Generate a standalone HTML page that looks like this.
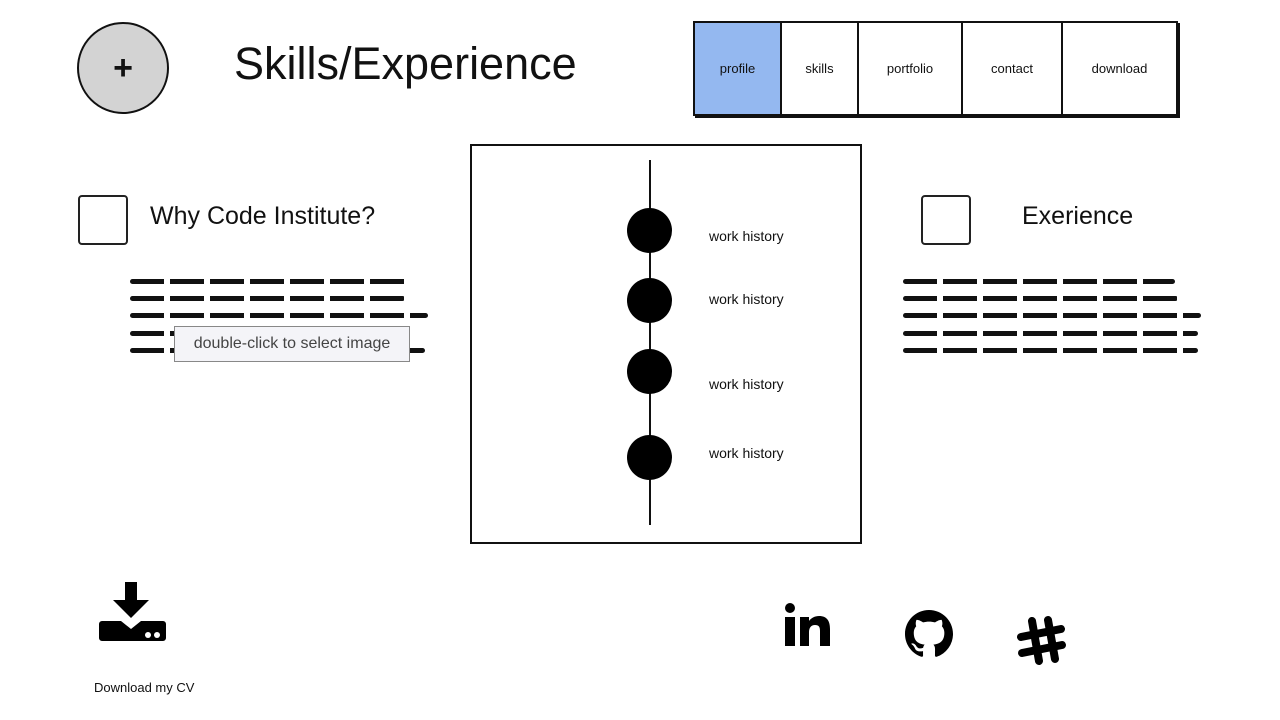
<!DOCTYPE html>
<html><head><meta charset="utf-8"><style>
body{margin:0;width:1280px;height:720px;background:#fff;position:relative;overflow:hidden;font-family:"Liberation Sans",sans-serif;color:#111}
.a{position:absolute}
.nav{left:693px;top:21px;width:481px;height:91px;border:2px solid #111;box-shadow:2px 2px 0 #111;display:flex}
.nav div{border-right:2px solid #111;display:flex;align-items:center;justify-content:center;font-size:13px;height:100%}
.nav div:last-child{border-right:none}
.ln{position:absolute;height:5px;background:repeating-linear-gradient(90deg,#111 0 34px,transparent 34px 40px);border-radius:3px}
.lbl{font-size:14px}
</style></head><body>
<div class="a" style="left:77px;top:22px;width:88px;height:88px;border-radius:50%;background:#d3d3d3;border:2px solid #111;display:flex;align-items:center;justify-content:center;font-size:34px;font-weight:bold">+</div>
<div class="a" style="left:234px;top:38px;font-size:45px">Skills/Experience</div>
<div class="a nav">
<div style="width:85px;background:#94b8f0">profile</div>
<div style="width:75px">skills</div>
<div style="width:102px">portfolio</div>
<div style="width:98px">contact</div>
<div style="flex:1">download</div>
</div>
<div class="a" style="left:78px;top:195px;width:46px;height:46px;border:2px solid #222;border-radius:4px"></div>
<div class="a" style="left:150px;top:202px;font-size:25px">Why Code Institute?</div>
<div class="a" style="left:921px;top:195px;width:46px;height:46px;border:2px solid #222;border-radius:4px"></div>
<div class="a" style="left:1022px;top:202px;font-size:25px">Exerience</div>
<div class="ln" style="left:130px;top:279px;width:280px"></div>
<div class="ln" style="left:130px;top:296px;width:275px"></div>
<div class="ln" style="left:130px;top:313px;width:298px"></div>
<div class="ln" style="left:130px;top:331px;width:60px"></div>
<div class="ln" style="left:130px;top:348px;width:295px"></div>
<div class="a" style="left:174px;top:326px;width:234px;height:34px;background:#f4f4f8;border:1px solid #888;font-size:16px;color:#444;line-height:34px;text-align:center">double-click to select image</div>
<div class="ln" style="left:903px;top:279px;width:272px"></div>
<div class="ln" style="left:903px;top:296px;width:275px"></div>
<div class="ln" style="left:903px;top:313px;width:298px"></div>
<div class="ln" style="left:903px;top:331px;width:295px"></div>
<div class="ln" style="left:903px;top:348px;width:295px"></div>
<div class="a" style="left:470px;top:144px;width:388px;height:396px;border:2px solid #111"></div>
<div class="a" style="left:649px;top:160px;width:2px;height:365px;background:#111"></div>
<div class="a" style="left:627px;top:208px;width:45px;height:45px;border-radius:50%;background:#000"></div>
<div class="a" style="left:627px;top:278px;width:45px;height:45px;border-radius:50%;background:#000"></div>
<div class="a" style="left:627px;top:349px;width:45px;height:45px;border-radius:50%;background:#000"></div>
<div class="a" style="left:627px;top:435px;width:45px;height:45px;border-radius:50%;background:#000"></div>
<div class="a lbl" style="left:709px;top:228px">work history</div>
<div class="a lbl" style="left:709px;top:291px">work history</div>
<div class="a lbl" style="left:709px;top:376px">work history</div>
<div class="a lbl" style="left:709px;top:445px">work history</div>
<svg class="a" style="left:99px;top:582px" width="67" height="60" viewBox="0 0 67 60">
<path d="M26 0h12v18h12L32 36 14 18h12z" fill="#000"/>
<path d="M0 42a3 3 0 0 1 3-3h19l10 8 10-8h22a3 3 0 0 1 3 3v14a3 3 0 0 1-3 3H3a3 3 0 0 1-3-3z" fill="#000"/>
<circle cx="49" cy="53" r="3" fill="#fff"/><circle cx="58" cy="53" r="3" fill="#fff"/>
</svg>
<div class="a" style="left:94px;top:680px;font-size:13px">Download my CV</div>
<svg class="a" style="left:785px;top:603px" width="46" height="44" viewBox="0 0 46 44">
<circle cx="5" cy="5" r="5" fill="#000"/><rect x="0" y="14" width="10" height="29" fill="#000"/>
<path d="M15 14h9v4c2-3 6-5 10-5 8 0 11 5 11 13v17h-10V28c0-4-1-6-5-6s-6 3-6 7v14h-9z" fill="#000"/>
</svg>
<svg class="a" style="left:905px;top:610px" width="48" height="48" viewBox="0 0 16 16">
<path fill="#000" d="M8 0C3.580 0 0 3.580 0 8c0 3.540 2.290 6.530 5.470 7.590.4.070.55-.17.55-.38 0-.19-.01-.82-.01-1.490-2.010.37-2.530-.49-2.690-.94-.09-.23-.48-.94-.82-1.130-.28-.15-.68-.52-.01-.53.63-.01 1.080.58 1.230.82.72 1.210 1.870.87 2.330.66.07-.52.28-.87.51-1.070-1.780-.2-3.640-.89-3.640-3.950 0-.87.31-1.590.82-2.150-.08-.2-.36-1.020.08-2.120 0 0 .67-.21 2.200.82.64-.18 1.320-.27 2-.27.68 0 1.360.09 2 .27 1.530-1.040 2.200-.82 2.200-.82.44 1.100.16 1.920.08 2.120.51.56.82 1.270.82 2.150 0 3.070-1.870 3.750-3.650 3.950.29.25.54.73.54 1.480 0 1.070-.01 1.930-.01 2.200 0 .21.15.46.55.38A8.013 8.013 0 0016 8c0-4.420-3.580-8-8-8z"/>
</svg>
<svg class="a" style="left:1015px;top:615px" width="52" height="52" viewBox="0 0 52 52">
<g stroke="#000" stroke-width="8" stroke-linecap="round">
<line x1="17" y1="6" x2="24" y2="46"/><line x1="33" y1="5" x2="40" y2="44"/>
<line x1="6" y1="22" x2="46" y2="14"/><line x1="7" y1="38" x2="47" y2="30"/>
</g></svg>
</body></html>
